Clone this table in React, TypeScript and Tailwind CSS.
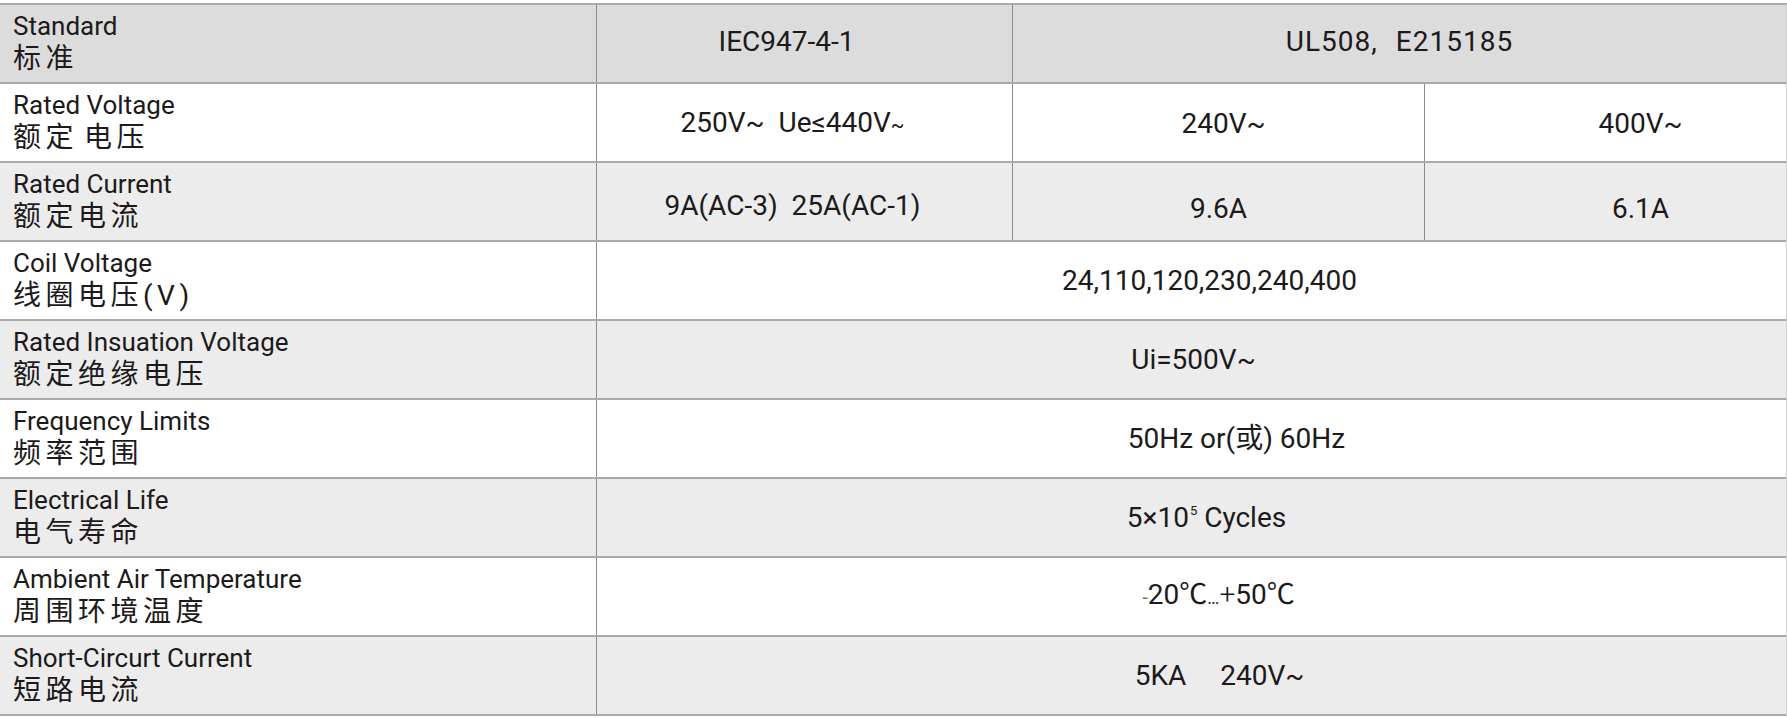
import React from "react";

const FONT = "font-['Roboto','Noto_Sans_CJK_SC',sans-serif]";

function Label({ en, zh }: { en: string; zh: React.ReactNode }) {
  return (
    <div className="flex flex-col items-start pl-[13px] pt-[5px]">
      <div className="text-[26px] leading-[32px] whitespace-pre">{en}</div>
      <div className="text-[28px] leading-[34px] tracking-[4.5px] whitespace-pre">{zh}</div>
    </div>
  );
}

function Cell({ children, className = "" }: { children: React.ReactNode; className?: string }) {
  return (
    <div className={`flex items-center justify-center border-l border-[#8c8c8c] text-[28px] leading-[34px] whitespace-pre ${className}`}>
      {children}
    </div>
  );
}

type Row = { en: string; zh: string; bg: string; value: React.ReactNode; cls?: string };

const fullRows: Row[] = [
  { en: "Coil Voltage", zh: "线圈电压(V)", bg: "bg-white", value: "24,110,120,230,240,400", cls: "pl-[36px]" },
  { en: "Rated Insuation Voltage", zh: "额定绝缘电压", bg: "bg-[#ececec]", value: "Ui=500V~", cls: "pl-[4px]" },
  { en: "Frequency Limits", zh: "频率范围", bg: "bg-white", value: "50Hz or(或) 60Hz", cls: "pl-[90px]" },
  {
    en: "Electrical Life",
    zh: "电气寿命",
    bg: "bg-[#ececec]",
    value: (
      <span>
        5×10<sup className="text-[13px] relative -top-[12px] ml-[1px]">5</sup> Cycles
      </span>
    ),
    cls: "pl-[30px]",
  },
  {
    en: "Ambient Air Temperature",
    zh: "周围环境温度",
    bg: "bg-white",
    value: (
      <span>
        <span className="text-[20px] text-[#777]">-</span>20℃<span className="text-[18px]">…</span>
        <span className="font-light">+</span>50℃
      </span>
    ),
    cls: "pl-[54px]",
  },
  {
    en: "Short-Circurt Current",
    zh: "短路电流",
    bg: "bg-[#ececec]",
    value: (
      <span>
        5KA<span className="inline-block w-[34px]"></span>240V~
      </span>
    ),
    cls: "pl-[56px]",
  },
];

export default function App() {
  return (
    <div className={`w-[1787px] h-[718px] bg-white pt-[3px] text-[#1c1a1b] ${FONT}`}>
      <div className="border-t-2 border-[#a9a9a9] border-r border-r-[#cfcfcf]">
        {/* Header */}
        <div className="grid grid-cols-[596px_416px_412px_1fr] h-[79px] border-b-2 border-[#a9a9a9] bg-[#dcdcdc]">
          <Label en="Standard" zh="标准" />
          <Cell className="pr-[36px] pb-[4px]">IEC947-4-1</Cell>
          <Cell className="col-span-2 pb-[4px]">
            <span className="tracking-[1px]">
              UL508,<span className="inline-block w-[18px]"></span>E215185
            </span>
          </Cell>
        </div>
        {/* Rated Voltage */}
        <div className="grid grid-cols-[596px_416px_412px_1fr] h-[79px] border-b-2 border-[#a9a9a9] bg-white">
          <Label
            en="Rated Voltage"
            zh={
              <span>
                额定<span className="inline-block w-[6px]"></span>电压
              </span>
            }
          />
          <Cell className="pr-[24px] pt-[2px]">
            <span>
              250V~  Ue≤440V<span className="text-[20px]">~</span>
            </span>
          </Cell>
          <Cell className="pl-[10px] pt-[2px]">240V~</Cell>
          <Cell className="pl-[70px] pt-[2px]">400V~</Cell>
        </div>
        {/* Rated Current */}
        <div className="grid grid-cols-[596px_416px_412px_1fr] h-[79px] border-b-2 border-[#a9a9a9] bg-[#ececec]">
          <Label en="Rated Current" zh="额定电流" />
          <Cell className="pr-[24px] pt-[8px]">9A(AC-3)  25A(AC-1)</Cell>
          <Cell className="pt-[14px]">9.6A</Cell>
          <Cell className="pl-[70px] pt-[14px]">6.1A</Cell>
        </div>
        {fullRows.map((r) => (
          <div key={r.en} className={`grid grid-cols-[596px_1fr] h-[79px] border-b-2 border-[#a9a9a9] ${r.bg}`}>
            <Label en={r.en} zh={r.zh} />
            <Cell className={r.cls ?? ""}>{r.value}</Cell>
          </div>
        ))}
      </div>
    </div>
  );
}
